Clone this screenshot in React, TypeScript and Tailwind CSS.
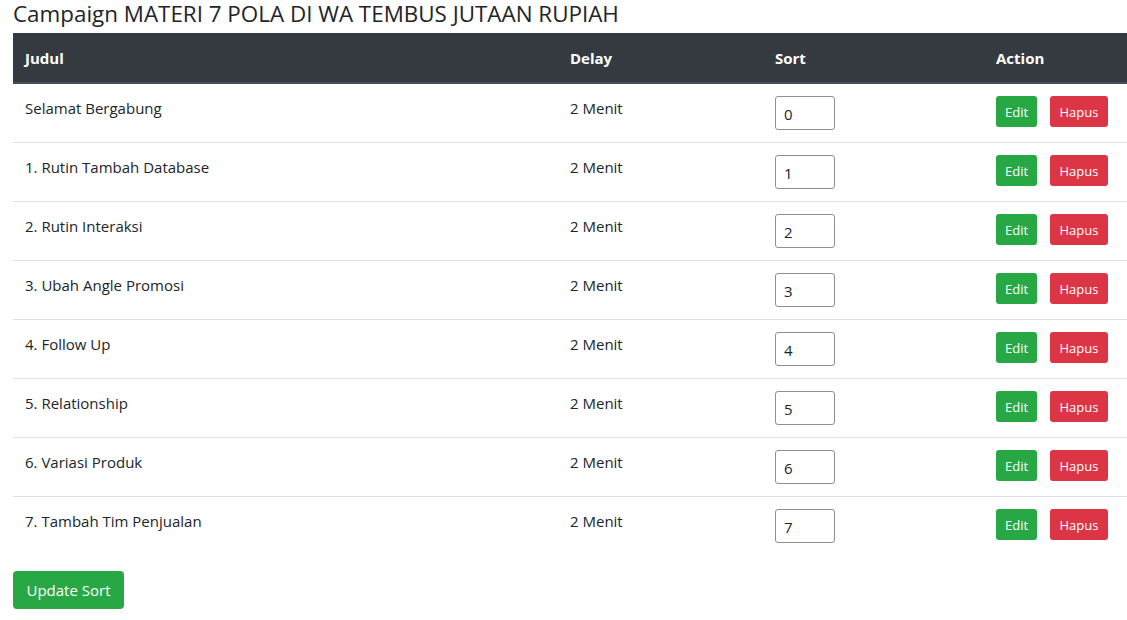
const rows = [
  { judul: "Selamat Bergabung", delay: "2 Menit", sort: 0 },
  { judul: "1. Rutin Tambah Database", delay: "2 Menit", sort: 1 },
  { judul: "2. Rutin Interaksi", delay: "2 Menit", sort: 2 },
  { judul: "3. Ubah Angle Promosi", delay: "2 Menit", sort: 3 },
  { judul: "4. Follow Up", delay: "2 Menit", sort: 4 },
  { judul: "5. Relationship", delay: "2 Menit", sort: 5 },
  { judul: "6. Variasi Produk", delay: "2 Menit", sort: 6 },
  { judul: "7. Tambah Tim Penjualan", delay: "2 Menit", sort: 7 },
];

const cols = "grid grid-cols-[545px_205px_221px_1fr]";

export default function App() {
  return (
    <div
      className="min-h-[620px] bg-white pl-[13px] text-[#212529]"
      style={{ fontFamily: '"Open Sans", "Noto Sans", sans-serif' }}
    >
      <h4 className="mb-[5px] text-[22.4px] leading-[28px] font-normal">
        Campaign MATERI 7 POLA DI WA TEMBUS JUTAAN RUPIAH
      </h4>

      <div className="w-full text-[15px] leading-[24px]">
        <div className={`${cols} border-b-2 border-[#454d55] bg-[#343a40] font-bold text-white`}>
          <div className="px-3 pt-[13px] pb-3">Judul</div>
          <div className="px-3 pt-[13px] pb-3">Delay</div>
          <div className="px-3 pt-[13px] pb-3">Sort</div>
          <div className="px-3 pt-[13px] pb-3">Action</div>
        </div>

        {rows.map((row, i) => (
          <div
            key={row.sort}
            className={`${cols} ${i > 0 ? "border-t border-[#dee2e6]" : ""}`}
          >
            <div className="p-3">{row.judul}</div>
            <div className="p-3">{row.delay}</div>
            <div className="p-3">
              <input
                type="text"
                defaultValue={row.sort}
                className="h-[34px] w-[60px] rounded-[3px] border border-[#8f8f8f] px-[8px] pt-[2px] text-[15px] outline-none"
              />
            </div>
            <div className="flex items-start gap-[13px] p-3">
              <button className="h-[31px] w-[41px] rounded-[3px] bg-[#28a745] text-[13px] text-white">
                Edit
              </button>
              <button className="h-[31px] w-[58px] rounded-[3px] bg-[#dc3545] text-[13px] text-white">
                Hapus
              </button>
            </div>
          </div>
        ))}
      </div>

      <button className="mt-4 h-[38px] w-[111px] rounded-[4px] bg-[#28a745] text-[15px] text-white">
        Update Sort
      </button>
    </div>
  );
}
